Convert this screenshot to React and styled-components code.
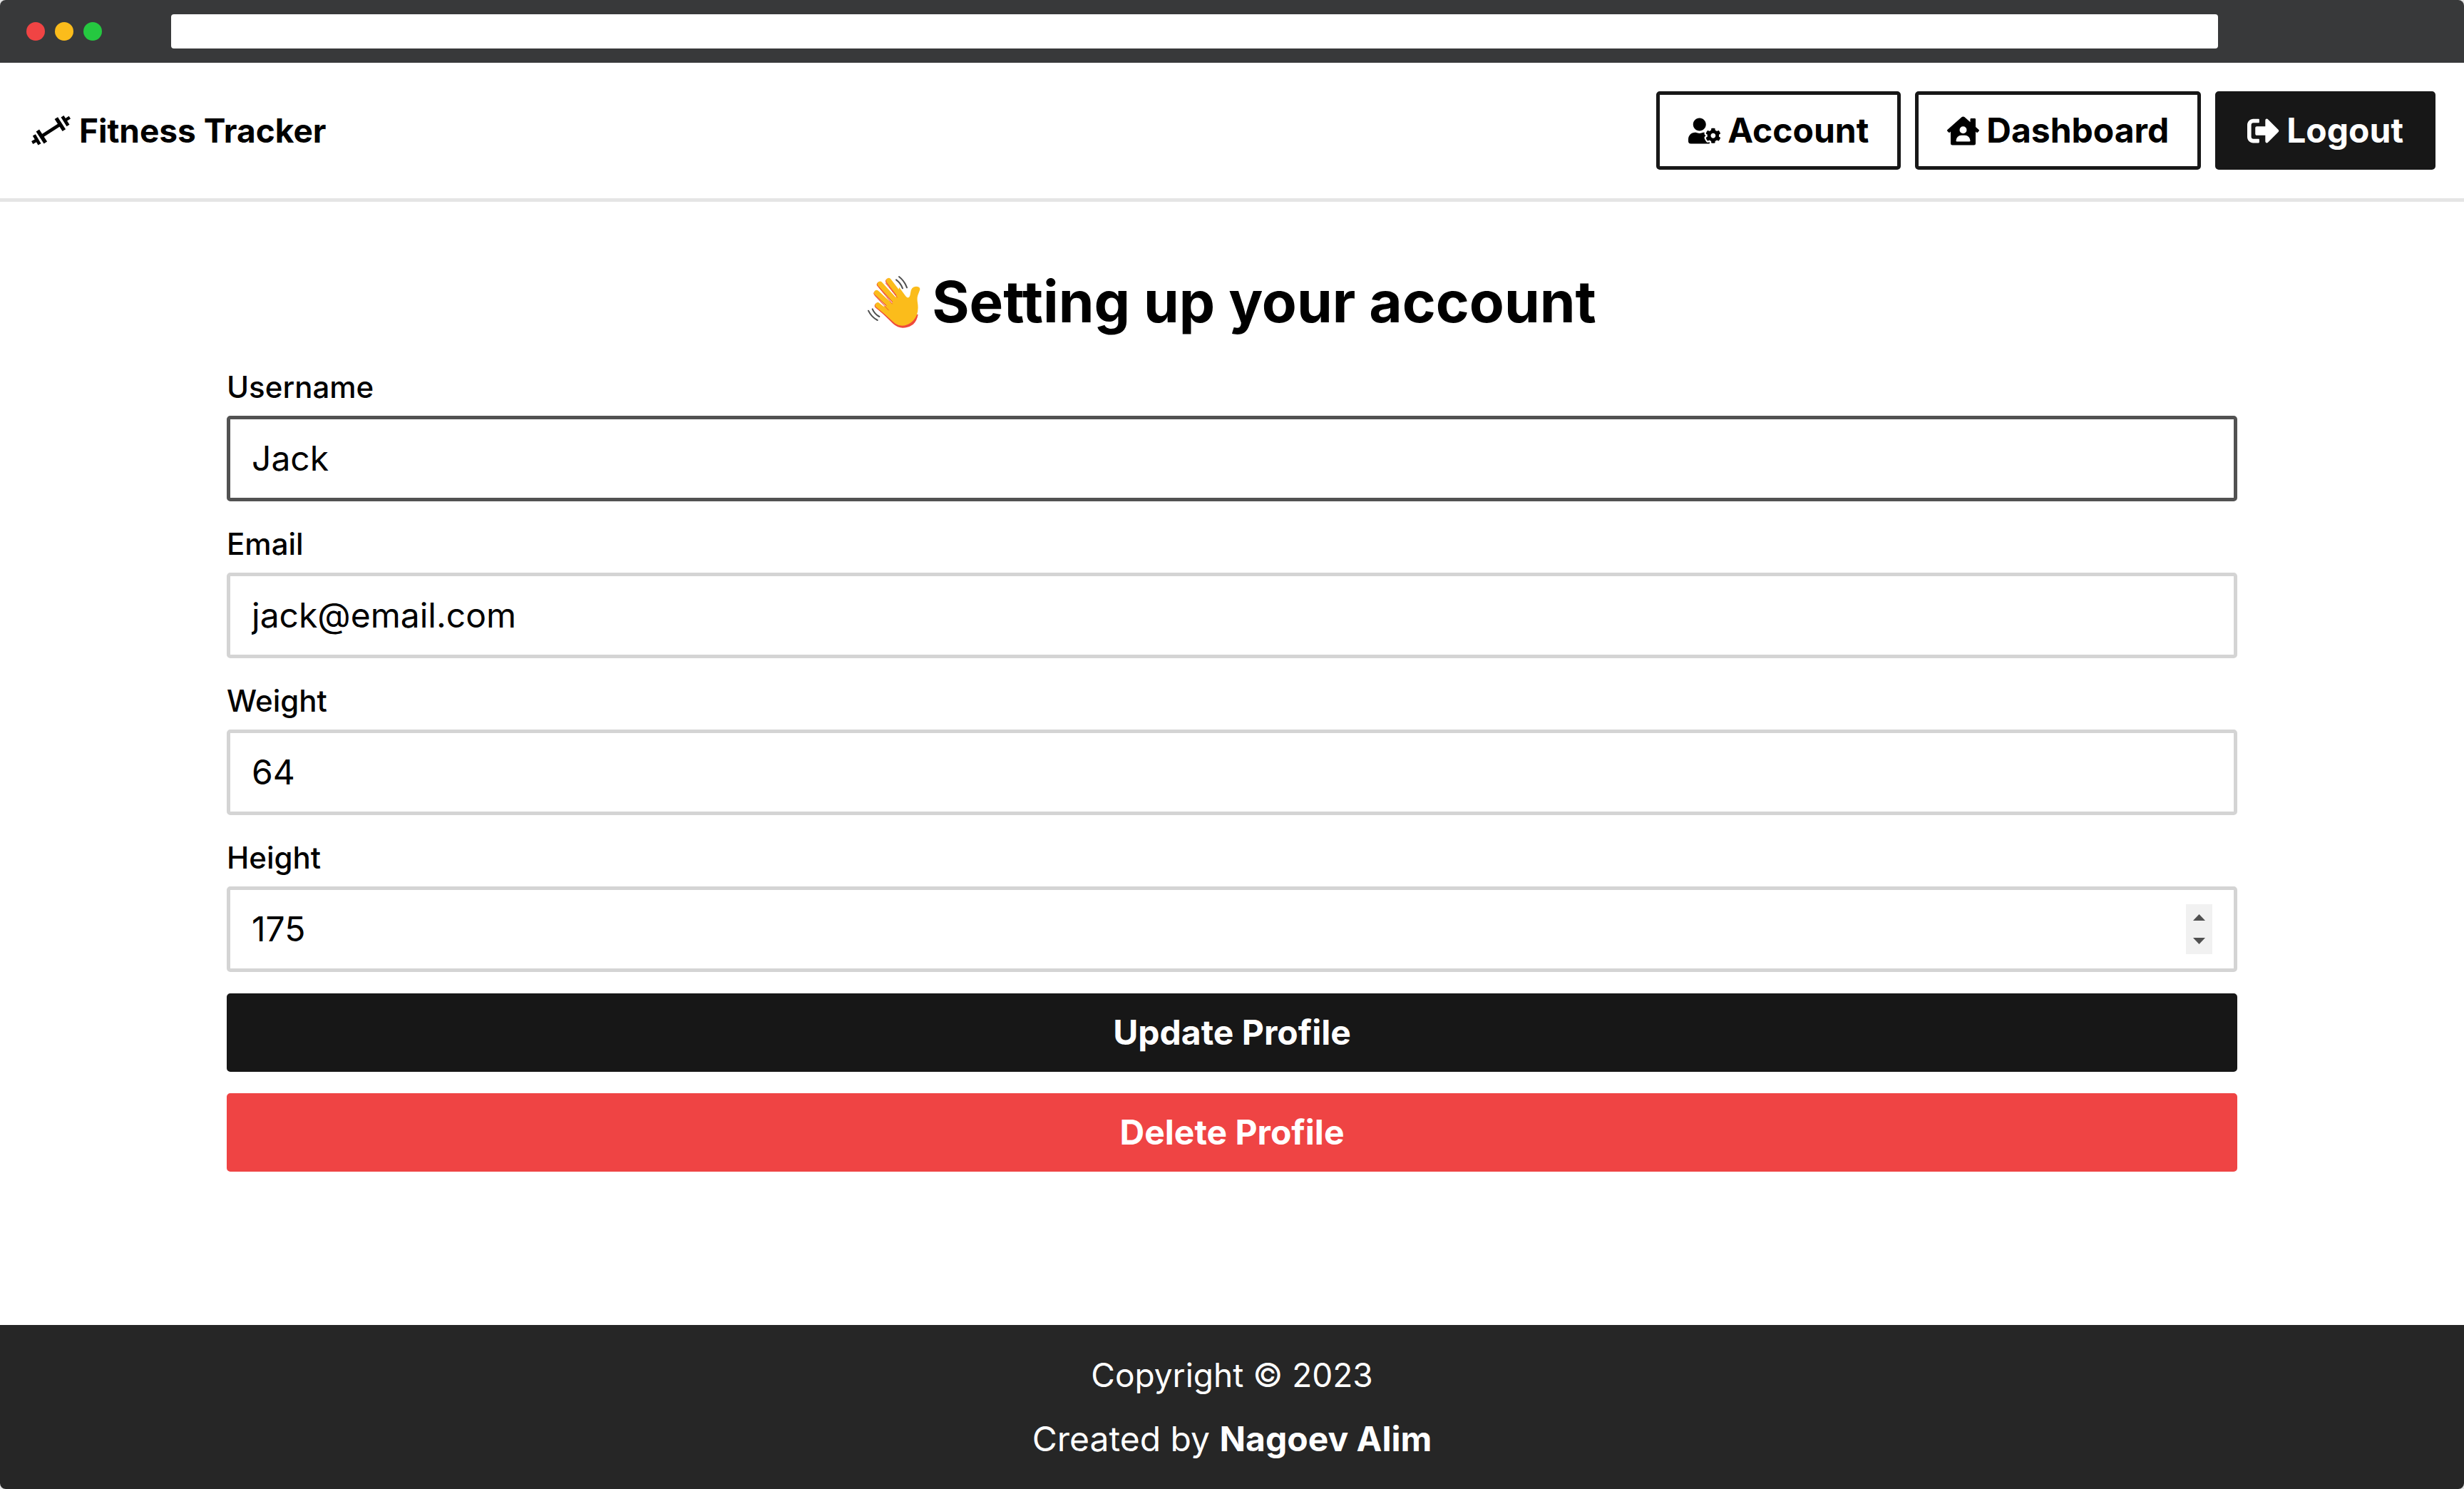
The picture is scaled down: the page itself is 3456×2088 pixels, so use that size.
import React, { useState } from "react";
import styled, { createGlobalStyle, css } from "styled-components";
import { FaUserCog, FaHouseUser, FaSignOutAlt } from "react-icons/fa";

const GlobalStyle = createGlobalStyle`
  *, *::before, *::after { box-sizing: border-box; }
  body {
    margin: 0;
    background: #e5e5e5;
    color: #000;
    font-family: Inter, "Noto Sans", sans-serif;
    font-size: 48px;
    line-height: 70px;
  }
  h1, p { margin: 0; }
  button, input { font: inherit; color: inherit; }
`;

const Window = styled.div`
  display: flex;
  flex-direction: column;
  min-height: 100vh;
  overflow: hidden;
  border-radius: 8px;
  background: #fff;
`;

const TitleBar = styled.div`
  display: flex;
  align-items: center;
  padding: 20px 345px 20px 37px;
  background: #38393a;
`;

const Lights = styled.div`
  display: flex;
  gap: 14px;
  margin-right: 97px;
`;

const Light = styled.span`
  width: 26px;
  height: 26px;
  border-radius: 50%;
  background: ${(p) => p.$color};
`;

const AddressInput = styled.input`
  flex: 1;
  min-width: 0;
  height: 48px;
  padding: 0 16px;
  border: 0;
  border-radius: 4px;
  outline: none;
  background: #fff;
  font-size: 28px;
`;

const Header = styled.header`
  display: flex;
  align-items: center;
  justify-content: space-between;
  padding: 40px;
  border-bottom: 5px solid #e5e5e5;
`;

const Brand = styled.a`
  display: flex;
  align-items: center;
  gap: 12px;
  padding-left: 4px;
  color: inherit;
  font-size: 46px;
  font-weight: 700;
  text-decoration: none;

  svg { width: 55px; height: 42px; }
`;

const Nav = styled.nav`
  display: flex;
  gap: 20px;
`;

const Button = styled.button`
  display: flex;
  align-items: center;
  justify-content: center;
  gap: 10px;
  height: 110px;
  padding: 0 40px;
  border: 5px solid #171717;
  border-radius: 5px;
  background: #fff;
  font-weight: 700;
  cursor: pointer;

  svg { width: 45px; height: 45px; }

  ${(p) => p.$tone === "dark" && css`
    background: #171717;
    color: #fff;
  `}
  ${(p) => p.$tone === "danger" && css`
    border-color: #ef4444;
    background: #ef4444;
    color: #fff;
  `}
`;

const Main = styled.main`
  display: flex;
  flex: 1;
  flex-direction: column;
  gap: 45px;
  width: 100%;
  max-width: 2880px;
  margin: 0 auto;
  padding: 95px 30px;
`;

const Title = styled.h1`
  display: flex;
  align-items: center;
  justify-content: center;
  gap: 16px;
  font-size: 80px;
  font-weight: 700;
  line-height: 90px;

  svg { width: 74px; height: 74px; }
`;

const Form = styled.form`
  display: flex;
  flex-direction: column;
  gap: 30px;
`;

const Field = styled.div`
  display: flex;
  flex-direction: column;
  gap: 10px;
`;

const Label = styled.label`
  font-size: 42px;
  font-weight: 500;
  line-height: 60px;
`;

const Control = styled.div`
  display: flex;
  align-items: center;
  height: 120px;
  padding: 0 30px;
  border: 5px solid ${(p) => (p.$active ? "#525252" : "#d4d4d4")};
  border-radius: 5px;
`;

const TextInput = styled.input`
  flex: 1;
  min-width: 0;
  padding: 0;
  border: 0;
  outline: none;
  background: transparent;
  appearance: textfield;

  &::-webkit-inner-spin-button { appearance: none; margin: 0; }
`;

const Stepper = styled.div`
  display: flex;
  flex-direction: column;
  width: 37px;
  height: 70px;
  background: #f1f1f1;
`;

const StepButton = styled.button`
  display: flex;
  flex: 1;
  align-items: ${(p) => (p.$down ? "flex-start" : "flex-end")};
  justify-content: center;
  padding: 12px 0;
  border: 0;
  background: none;

  svg { display: block; width: 17px; height: 9px; }
`;

const Footer = styled.footer`
  display: flex;
  flex-direction: column;
  align-items: center;
  gap: 20px;
  padding: 35px 40px;
  background: #262626;
  color: #fff;
`;

const Copyright = styled.p`
  font-size: 46px;
`;

const AuthorLink = styled.a`
  color: inherit;
  font-weight: 700;
  text-decoration: none;
`;

function Dumbbell() {
  return (
    <svg viewBox="43 37 164 126" fill="none" stroke="currentColor" aria-hidden="true">
      <path d="M85 125 L164 74" strokeWidth="14" />
      <path d="M69 100 L102 151 M147 48 L180 99" strokeWidth="16" />
      <path d="M54 119 L77 158 M173 41 L197 79" strokeWidth="14" />
      <path d="M46 151 L62 142 M188 55 L204 45" strokeWidth="13" />
    </svg>
  );
}

function WavingHand() {
  return (
    <svg viewBox="33 21 222 222" fill="none" strokeLinecap="round" aria-hidden="true">
      <g stroke="#ef5236" strokeWidth="23">
        <path d="M74 149 L135 199" />
        <path d="M70 97 L150 172" />
        <path d="M83 60 L165 150" />
        <path d="M120 46 L180 125" />
      </g>
      <path
        d="M76 163 L140 225 Q160 243 182 242 Q206 242 224 228 Q240 214 245 186 Z"
        fill="#ef4a3c"
      />
      <g stroke="#fbbc1b" strokeWidth="22">
        <path d="M76 147 L137 197" />
        <path d="M71 95 L152 170" />
        <path d="M85 58 L167 148" />
        <path d="M122 44 L182 123" />
      </g>
      <path
        d="M96 154 L133 142 L152 112 L166 72 L190 105 Q198 117 204 115 Q211 113 213 96
           Q215 69 236 68 Q257 69 252 84 L244 105 Q240 118 243 136
           Q248 168 239 190 Q228 216 202 228 Q172 240 149 224 Q122 202 80 158 Z"
        fill="#fbbc1b"
      />
      <g stroke="#ef5236" strokeWidth="3">
        <path d="M109 54 L157 114" />
        <path d="M81 73 L136 141" />
        <path d="M65 108 L121 168" />
      </g>
      <g stroke="#505050" strokeWidth="6">
        <path d="M153 40 Q172 54 180 76" />
        <path d="M165 27 Q188 45 198 73" />
        <path d="M53 163 Q62 184 82 195" />
        <path d="M36 170 Q48 196 74 210" />
      </g>
    </svg>
  );
}

const fields = [
  { id: "username", label: "Username", type: "text", value: "Jack", active: true },
  { id: "email", label: "Email", type: "email", value: "jack@email.com" },
  { id: "weight", label: "Weight", type: "number", value: "64" },
  { id: "height", label: "Height", type: "number", value: "175", stepper: true },
];

function ProfileField({ id, label, type, value: initial, active, stepper }) {
  const [value, setValue] = useState(initial);
  const step = (delta) => setValue((v) => String(Number(v) + delta));
  return (
    <Field>
      <Label htmlFor={id}>{label}</Label>
      <Control $active={active}>
        <TextInput id={id} type={type} value={value} onChange={(e) => setValue(e.target.value)} />
        {stepper && (
          <Stepper>
            <StepButton type="button" aria-label="Increase" onClick={() => step(1)}>
              <svg viewBox="0 0 17 9"><path d="M0 9 L8.5 0 L17 9 Z" fill="#505050" /></svg>
            </StepButton>
            <StepButton $down type="button" aria-label="Decrease" onClick={() => step(-1)}>
              <svg viewBox="0 0 17 9"><path d="M0 0 L8.5 9 L17 0 Z" fill="#505050" /></svg>
            </StepButton>
          </Stepper>
        )}
      </Control>
    </Field>
  );
}

export default function App() {
  return (
    <Window>
      <GlobalStyle />
      <TitleBar>
        <Lights>
          <Light $color="#f04444" />
          <Light $color="#fbbc1b" />
          <Light $color="#25c840" />
        </Lights>
        <AddressInput type="text" aria-label="Address" />
      </TitleBar>
      <Header>
        <Brand href="#">
          <Dumbbell />
          Fitness Tracker
        </Brand>
        <Nav>
          <Button type="button"><FaUserCog />Account</Button>
          <Button type="button"><FaHouseUser />Dashboard</Button>
          <Button type="button" $tone="dark"><FaSignOutAlt />Logout</Button>
        </Nav>
      </Header>
      <Main>
        <Title><WavingHand />Setting up your account</Title>
        <Form onSubmit={(e) => e.preventDefault()}>
          {fields.map((f) => <ProfileField key={f.id} {...f} />)}
          <Button $tone="dark">Update Profile</Button>
          <Button type="button" $tone="danger">Delete Profile</Button>
        </Form>
      </Main>
      <Footer>
        <Copyright>Copyright © 2023</Copyright>
        <p>Created by <AuthorLink href="#">Nagoev Alim</AuthorLink></p>
      </Footer>
    </Window>
  );
}
